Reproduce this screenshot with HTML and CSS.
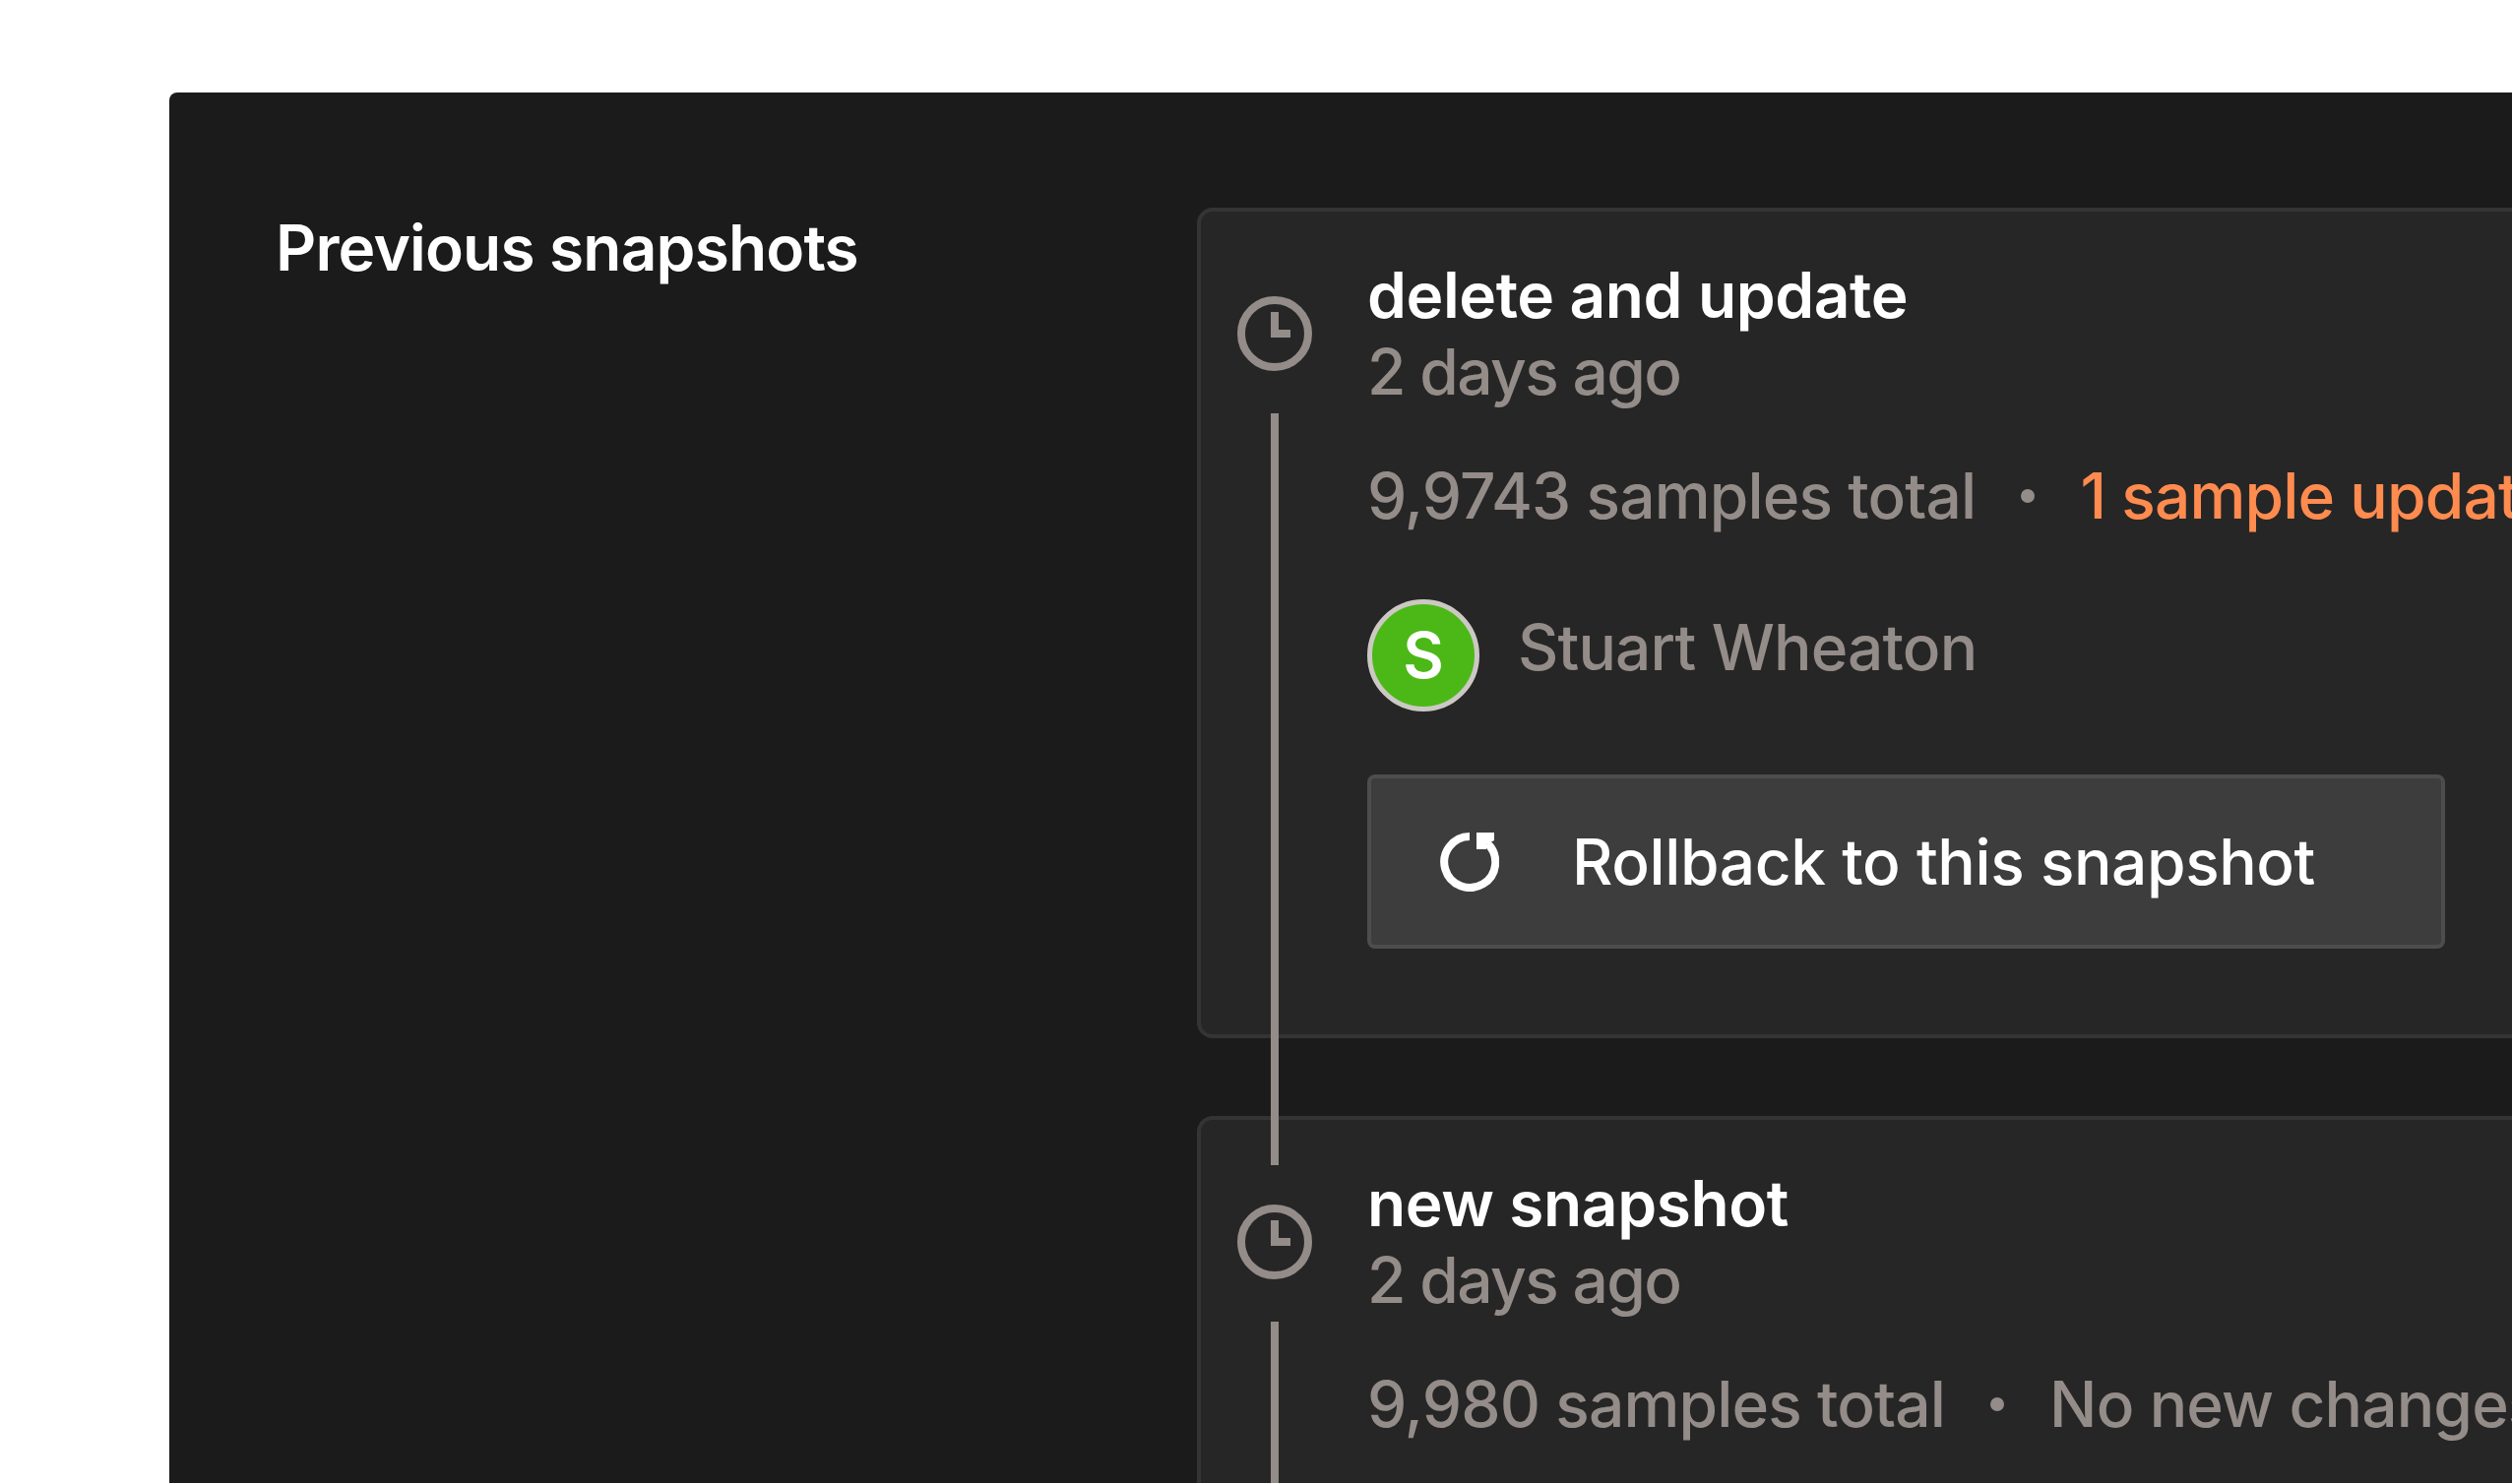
FILE: index.html
```html
<!DOCTYPE html>
<html lang="en">
<head>
    <meta charset="UTF-8">
    <title>Previous snapshots</title>
    <link rel="stylesheet" href="styles.css">
</head>
<body>
    <div class="painel">
        <h2 class="titulo">Previous snapshots</h2>
        <div class="lista">
            <div class="card">
                <div class="linha"></div>
                <svg class="relogio" viewBox="0 0 76 76"><circle cx="38" cy="38" r="34"/><path d="M38 16V38H54"/></svg>
                <div class="conteudo">
                    <div class="nome">delete and update</div>
                    <div class="data">2 days ago</div>
                    <div class="stats">
                        <span>9,9743 samples total</span>
                        <span class="ponto"></span>
                        <span class="laranja">1 sample updated</span>
                    </div>
                    <div class="autor">
                        <div class="avatar">S</div>
                        <span class="autor-nome">Stuart Wheaton</span>
                    </div>
                    <button class="rollback">
                        <svg class="icone" viewBox="0 0 60 60"><path class="arco" d="M30 4A26 26 0 1 0 48 11"/><path class="seta" d="M37 0H55V8L47 12V17H37Z"/></svg>
                        Rollback to this snapshot
                    </button>
                </div>
            </div>
            <div class="card">
                <div class="linha"></div>
                <svg class="relogio" viewBox="0 0 76 76"><circle cx="38" cy="38" r="34"/><path d="M38 16V38H54"/></svg>
                <div class="conteudo">
                    <div class="nome">new snapshot</div>
                    <div class="data">2 days ago</div>
                    <div class="stats">
                        <span>9,980 samples total</span>
                        <span class="ponto"></span>
                        <span>No new changes</span>
                    </div>
                </div>
            </div>
        </div>
    </div>
</body>
</html>
```
FILE: styles.css
```css
html, body {
    margin: 0;
    padding: 0;
    height: 1508px;
    overflow: hidden;
    background-color: #fff;
}

body {
    font-family: Inter, "Liberation Sans", sans-serif;
    padding: 94px 0 0 172px;
    box-sizing: border-box;
}

.painel {
    display: flex;
    width: 2600px;
    height: 1413px;
    background-color: #1b1b1b;
    border-radius: 8px 0 0 0;
    overflow: hidden;
    padding-top: 117px;
    box-sizing: border-box;
}

.titulo {
    width: 1044px;
    flex: none;
    margin: 2px 0 0;
    padding: 0 0 0 108px;
    box-sizing: border-box;
    color: #fff;
    font-size: 64px;
    font-weight: 600;
    line-height: 78px;
    letter-spacing: -0.85px;
}

.lista {
    display: flex;
    flex-direction: column;
    gap: 79px;
}

.card {
    position: relative;
    display: flex;
    width: 1400px;
    box-sizing: border-box;
    padding: 46px 0 87px 37px;
    background-color: #262626;
    border: 4px solid #343434;
    border-radius: 16px;
}

/* linha do tempo, passa por cima do card seguinte */
.linha {
    position: absolute;
    left: 71px;
    top: 205px;
    width: 8px;
    height: 764px;
    background-color: #938c88;
    z-index: 1;
}

.relogio {
    flex: none;
    width: 76px;
    height: 76px;
    margin: 40px 56px 0 0;
    fill: none;
    stroke: #938c88;
    stroke-width: 8;
}

.conteudo {
    width: 1095px;
    font-size: 64px;
    font-weight: 450;
    line-height: 78px;
    letter-spacing: -0.85px;
    color: #938c88;
}

.nome {
    color: #fff;
    font-weight: 600;
    letter-spacing: -0.4px;
}

.data {
    letter-spacing: -1.6px;
}

.stats {
    display: flex;
    align-items: center;
    margin-top: 48px;
    white-space: nowrap;
}

.ponto {
    flex: none;
    width: 14px;
    height: 14px;
    margin: 0 46px;
    border-radius: 50%;
    background-color: #938c88;
}

.laranja {
    color: #ff8b4f;
}

.autor {
    display: flex;
    align-items: flex-start;
    gap: 39px;
    margin-top: 66px;
}

.avatar {
    display: flex;
    align-items: center;
    justify-content: center;
    width: 114px;
    height: 114px;
    box-sizing: border-box;
    border: 5px solid #ccc8c4;
    border-radius: 50%;
    background-color: #4cb817;
    color: #fff;
    font-size: 64px;
    font-weight: 600;
    letter-spacing: 0;
}

.autor-nome {
    margin-top: 10px;
}

.rollback {
    display: flex;
    align-items: center;
    gap: 74px;
    width: 100%;
    height: 177px;
    margin-top: 64px;
    padding: 0 0 0 70px;
    box-sizing: border-box;
    background-color: #3d3d3d;
    border: 4px solid #4d4d4d;
    border-radius: 8px;
    color: #fff;
    font-family: inherit;
    font-size: 64px;
    font-weight: 450;
    letter-spacing: -0.4px;
    line-height: 78px;
}

.icone {
    flex: none;
    width: 60px;
    height: 60px;
}

.arco {
    fill: none;
    stroke: #fff;
    stroke-width: 8;
}

.seta {
    fill: #fff;
}
```
